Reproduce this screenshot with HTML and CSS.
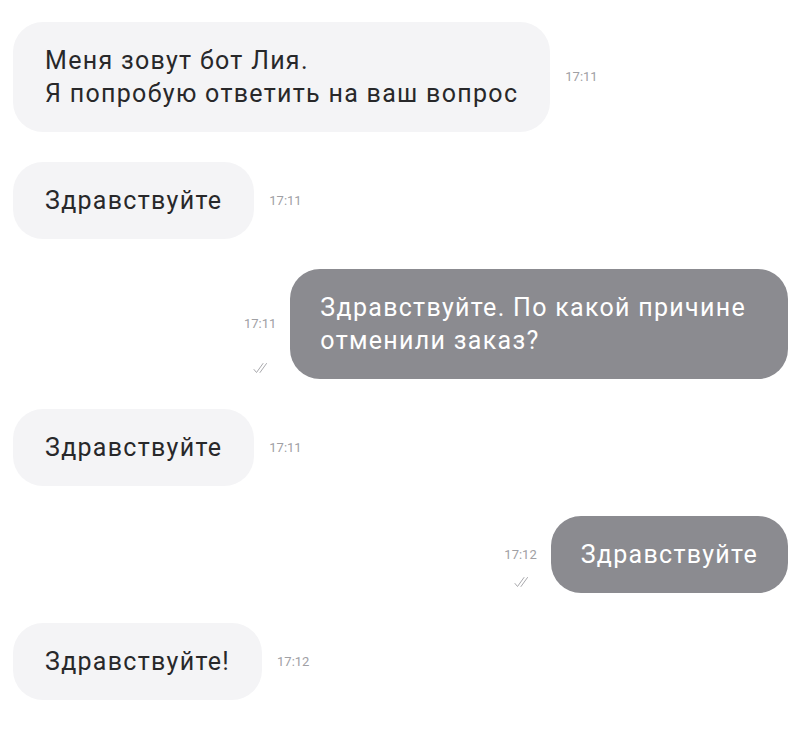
FILE: index.html
```html
<!DOCTYPE html>
<html lang="ru">
<head>
    <meta charset="UTF-8">
    <meta name="viewport" content="width=device-width, initial-scale=1.0">
    <title>Чат</title>
    <link rel="stylesheet" href="styles.css">
</head>
<body>

    <div class="chat">

        <div class="row in">
            <div class="bubble">Меня зовут бот Лия.<br>Я попробую ответить на ваш вопрос</div>
            <div class="time">17:11</div>
        </div>

        <div class="row in">
            <div class="bubble">Здравствуйте</div>
            <div class="time">17:11</div>
        </div>

        <div class="row out">
            <div class="meta">
                <div class="time">17:11</div>
                <svg class="ticks" width="16" height="12" viewBox="0 0 16 12">
                    <path d="M1 7.5 L3.5 10.5 L10 1.5 M7 10.5 L13.5 1.5" fill="none" stroke="#a9a9ad" stroke-width="1" stroke-linecap="round" stroke-linejoin="round"/>
                </svg>
            </div>
            <div class="bubble wide">Здравствуйте. По какой причине<br>отменили заказ?</div>
        </div>

        <div class="row in">
            <div class="bubble">Здравствуйте</div>
            <div class="time">17:11</div>
        </div>

        <div class="row out">
            <div class="meta">
                <div class="time">17:12</div>
                <svg class="ticks" width="16" height="12" viewBox="0 0 16 12">
                    <path d="M1 7.5 L3.5 10.5 L10 1.5 M7 10.5 L13.5 1.5" fill="none" stroke="#a9a9ad" stroke-width="1" stroke-linecap="round" stroke-linejoin="round"/>
                </svg>
            </div>
            <div class="bubble">Здравствуйте</div>
        </div>

        <div class="row in">
            <div class="bubble">Здравствуйте!</div>
            <div class="time">17:12</div>
        </div>

    </div>

</body>
</html>
```

FILE: styles.css
```css
body {
    font-family: 'Roboto', 'Liberation Sans', sans-serif;
    background-color: #ffffff;
    margin: 0;
    padding: 0;
}

.chat {
    display: flex;
    flex-direction: column;
    gap: 30px;
    padding: 22px 12px 0 13px;
}

.row {
    display: flex;
    align-items: center;
}

.row.out {
    justify-content: flex-end;
    align-items: stretch;
}

.bubble {
    padding: 22px 32px;
    font-size: 25px;
    line-height: 33px;
    letter-spacing: 1.3px;
    border-radius: 30px;
}

.in .bubble {
    background-color: #f4f4f6;
    color: #28282a;
}

.out .bubble {
    background-color: #8b8b90;
    color: #ffffff;
    padding: 22px 30px;
}

.out .bubble.wide {
    padding-right: 42px;
}

.time {
    font-size: 13px;
    line-height: 14px;
    color: #a0a0a4;
}

.in .time {
    margin-left: 15px;
}

.meta {
    display: grid;
    grid-template-rows: 1fr auto 1fr;
    justify-items: end;
    margin-right: 14px;
}

.meta .time {
    grid-row: 2;
}

.ticks {
    grid-row: 3;
    align-self: end;
    margin-bottom: 5px;
    margin-right: 7px;
}
```
